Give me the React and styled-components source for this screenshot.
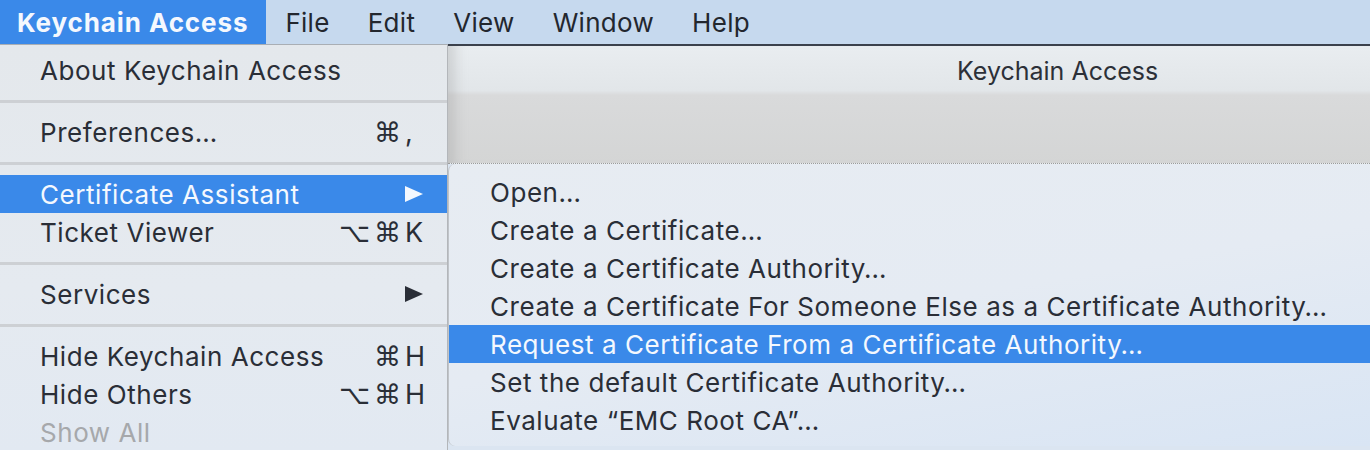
import React from "react";
import styled, { createGlobalStyle } from "styled-components";

const GlobalStyle = createGlobalStyle`
  html, body {
    margin: 0;
    padding: 0;
    background: #dbe5f1;
    overflow: hidden;
  }
  body {
    font-family: Inter, "Noto Sans", "DejaVu Sans", sans-serif;
    -webkit-font-smoothing: antialiased;
  }
`;

const Screen = styled.div`
  width: 1370px;
  height: 450px;
  display: flex;
  flex-direction: column;
  overflow: hidden;
  font-family: Inter, "DejaVu Sans", sans-serif;
`;

const MenuBar = styled.div`
  display: flex;
  height: 44px;
  flex-shrink: 0;
  background: #c6d9ee;
`;

const MenuTitle = styled.div`
  display: flex;
  align-items: center;
  padding: 0 ${({ $first }) => ($first ? "18px 0 17px" : "19px")};
  font-size: 26px;
  font-weight: ${({ $first }) => ($first ? 700 : 400)};
  color: ${({ $active }) => ($active ? "#f4f8fe" : "#23272e")};
  background: ${({ $active }) => ($active ? "#3a89e9" : "transparent")};
  letter-spacing: ${({ $first }) => ($first ? "0.9px" : "0.3px")};
`;

const Body = styled.div`
  flex: 1;
  display: flex;
  min-height: 0;
`;

const Menu = styled.div`
  width: 447px;
  flex-shrink: 0;
  padding-top: 6px;
  border-top: 1px solid #a9aeb4;
  border-right: 1px solid #b3b6ba;
  background: linear-gradient(180deg, #e4e8ec 0%, #e5eaf0 60%, #e2e9f2 100%);
`;

const Item = styled.div`
  display: flex;
  align-items: center;
  height: 38px;
  padding: 0 24px 0 ${({ $indent }) => $indent}px;
  font-size: 26px;
  letter-spacing: 0.55px;
  white-space: nowrap;
  color: ${({ $highlight, $disabled }) =>
    $highlight ? "#f4f8fe" : $disabled ? "#a6a8ab" : "#2a2e37"};
  background: ${({ $highlight }) => ($highlight ? "#3a89e9" : "transparent")};
`;

const Label = styled.span`
  flex: 1;
`;

const Shortcut = styled.span`
  display: flex;
  align-items: baseline;
`;

const Mods = styled.span`
  font-family: "DejaVu Sans", Inter, sans-serif;
  font-size: 27px;
  letter-spacing: 4px;
  text-align: right;
`;

const Key = styled.span`
  width: 18px;
  font-size: 27px;
  letter-spacing: 0;
`;

const Separator = styled.div`
  height: 24px;
  display: flex;
  align-items: center;

  &::after {
    content: "";
    flex: 1;
    height: 3px;
    background: #cdd0d4;
  }
`;

const Arrow = styled.svg`
  width: 18px;
  height: 16px;
  fill: currentColor;
`;

const RightSide = styled.div`
  flex: 1;
  display: flex;
  flex-direction: column;
  min-width: 0;
`;

const WindowBar = styled.div`
  height: 120px;
  flex-shrink: 0;
  padding: 10px 0 0 509px;
  box-sizing: border-box;
  border-top: 2px solid #3b414c;
  border-bottom: 1px dotted #9c9c9c;
  background: linear-gradient(
    180deg,
    #e9edf0 0%,
    #e2e6e9 38%,
    #d9dadb 42%,
    #d4d5d5 100%
  );
  box-shadow: inset 18px 0 14px -12px rgba(150, 150, 150, 0.35);
`;

const WindowTitle = styled.div`
  font-size: 25px;
  line-height: 30px;
  color: #2c3038;
`;

const Submenu = styled.div`
  flex: 1;
  padding: 9px 0 6px;
  margin-bottom: 4px;
  border-left: 1px solid #c0c4c9;
  border-radius: 7px 0 0 7px;
  background: linear-gradient(170deg, #e7ecf2 0%, #e5ebf3 50%, #d9e5f4 100%);
`;

const ArrowIcon = () => (
  <Arrow viewBox="0 0 18 16">
    <polygon points="0,0 18,8 0,16" />
  </Arrow>
);

const menuTitles = ["Keychain Access", "File", "Edit", "View", "Window", "Help"];

const appMenu = [
  { label: "About Keychain Access" },
  "sep",
  { label: "Preferences…", mods: "⌘", key: "," },
  "sep",
  { label: "Certificate Assistant", submenu: true, highlight: true },
  { label: "Ticket Viewer", mods: "⌥⌘", key: "K" },
  "sep",
  { label: "Services", submenu: true },
  "sep",
  { label: "Hide Keychain Access", mods: "⌘", key: "H" },
  { label: "Hide Others", mods: "⌥⌘", key: "H" },
  { label: "Show All", disabled: true },
];

const certMenu = [
  "Open…",
  "Create a Certificate…",
  "Create a Certificate Authority…",
  "Create a Certificate For Someone Else as a Certificate Authority…",
  "Request a Certificate From a Certificate Authority…",
  "Set the default Certificate Authority…",
  "Evaluate “EMC Root CA”…",
];

const App = () => (
  <>
    <GlobalStyle />
    <Screen>
      <MenuBar>
        {menuTitles.map((title, i) => (
          <MenuTitle key={title} $first={i === 0} $active={i === 0}>
            {title}
          </MenuTitle>
        ))}
      </MenuBar>
      <Body>
        <Menu>
          {appMenu.map((entry, i) =>
            entry === "sep" ? (
              <Separator key={i} />
            ) : (
              <Item
                key={entry.label}
                $indent={40}
                $highlight={entry.highlight}
                $disabled={entry.disabled}
              >
                <Label>{entry.label}</Label>
                {entry.submenu && <ArrowIcon />}
                {entry.mods && (
                  <Shortcut>
                    <Mods>{entry.mods}</Mods>
                    <Key>{entry.key}</Key>
                  </Shortcut>
                )}
              </Item>
            )
          )}
        </Menu>
        <RightSide>
          <WindowBar>
            <WindowTitle>Keychain Access</WindowTitle>
          </WindowBar>
          <Submenu>
            {certMenu.map((label, i) => (
              <Item key={label} $indent={41} $highlight={i === 4}>
                <Label>{label}</Label>
              </Item>
            ))}
          </Submenu>
        </RightSide>
      </Body>
    </Screen>
  </>
);

export default App;
